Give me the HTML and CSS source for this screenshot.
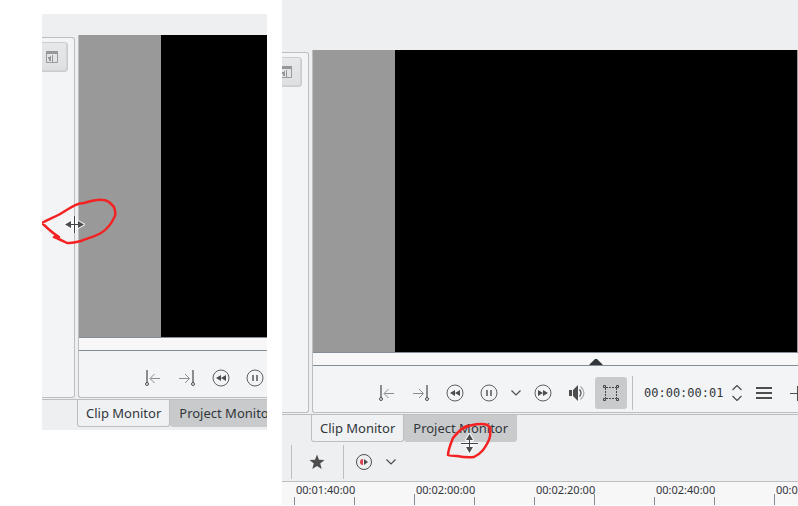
FILE: index.html
```html
<!DOCTYPE html>
<html lang="en">
<head>
<meta charset="utf-8">
<title>Monitor panel resizing</title>
<link rel="stylesheet" href="styles.css">
</head>
<body>
<svg class="symbols" aria-hidden="true">
  <symbol id="mark-in" viewBox="0 0 16 16"><path d="M1 0h2v13H1z" fill="#8b8d8f"/><path d="M5.500 8.500H15M9.500 4L5 8.500 9.500 13" fill="none" stroke="#8b8d8f"/><circle cx="2" cy="14" r="1.500" fill="#f3f4f6" stroke="#4d4d4d"/></symbol>
  <symbol id="mark-out" viewBox="0 0 16 16"><path d="M13 0h2v13h-2z" fill="#8b8d8f"/><path d="M0 8.500h10M6 4l4.500 4.500L6 13" fill="none" stroke="#8b8d8f"/><circle cx="14" cy="14" r="1.500" fill="#f3f4f6" stroke="#4d4d4d"/></symbol>
  <symbol id="rewind" viewBox="0 0 18 18"><circle cx="9" cy="9" r="8" fill="none" stroke="#5d5f61"/><path d="M9 6v6L4 9zM14 6v6L9 9z" fill="#4d4d4d"/></symbol>
  <symbol id="forward" viewBox="0 0 18 18"><circle cx="9" cy="9" r="8" fill="none" stroke="#5d5f61"/><path d="M4 6v6l5-3zM9 6v6l5-3z" fill="#4d4d4d"/></symbol>
  <symbol id="pause" viewBox="0 0 18 18"><circle cx="9" cy="9" r="8" fill="none" stroke="#5d5f61"/><path d="M6 6h2v6H6zM10 6h2v6h-2z" fill="#7b7d7f"/></symbol>
  <symbol id="chevron" viewBox="0 0 10 6"><path d="M.5.5L5 5 9.500.5" fill="none" stroke="#4d4d4d" stroke-width="1.200"/></symbol>
  <symbol id="window" viewBox="0 0 12 12"><path d="M.5.5h11v11H.5z" fill="none" stroke="#9b9d9e"/><path d="M0 0h12v3H0z" fill="#96989a"/><path d="M4 5h1v5H3V8H2V6h2zM6 4h1v7H6z" fill="#96989a"/></symbol>
</svg>

<figure class="shot shot-narrow">
  <div class="header"></div>
  <div class="panels">
    <section class="bin" aria-label="Project bin">
      <button class="bin-button" aria-label="Show panel"><svg width="12" height="12"><use href="#window"/></svg></button>
    </section>
    <section class="monitor" aria-label="Monitor">
      <div class="video"><div class="frame"></div></div>
      <div class="seek"></div>
      <div class="controls">
        <button class="tool" aria-label="Zone start"><svg width="16" height="16"><use href="#mark-in"/></svg></button>
        <button class="tool" aria-label="Zone end"><svg width="16" height="16"><use href="#mark-out"/></svg></button>
        <button class="tool" aria-label="Rewind"><svg width="18" height="18"><use href="#rewind"/></svg></button>
        <button class="tool" aria-label="Pause"><svg width="18" height="18"><use href="#pause"/></svg></button>
      </div>
    </section>
  </div>
  <nav class="tabs">
    <button class="tab tab-active">Clip Monitor</button>
    <button class="tab">Project Monitor</button>
  </nav>
  <svg class="note note-side" width="80" height="52" viewBox="0 0 80 52" aria-hidden="true">
    <path class="ink" d="M2 28C11 23 18 21 25 16C33 11 38 8 44 8C51 6 57 4 63 5C69 5 71 9 74 12C75 16 76 17 75 21C72 27 69 33 61 38C54 42 48 43 41 46C36 47 32 48 27 48C23 46 19 44 14 42L19 42C12 38 8 34 2 28"/>
  </svg>
  <svg class="pointer pointer-side" width="21" height="21" viewBox="0 0 21 21" aria-hidden="true">
    <path class="halo" d="M10.500 2v17M1.500 10.500h18M7 7.500l-5.500 3 5.500 3zM14 7.500l5.500 3-5.500 3z"/>
    <path class="line" d="M10.500 2v17M6 10.500h9"/>
    <path class="heads" d="M7 7l-6 3.500 6 3.500zM14 7l6 3.500-6 3.500z"/>
  </svg>
</figure>

<figure class="shot shot-wide">
  <div class="header"></div>
  <div class="panels">
    <section class="bin" aria-label="Project bin">
      <button class="bin-button" aria-label="Show panel"><svg width="12" height="12"><use href="#window"/></svg></button>
    </section>
    <section class="monitor" aria-label="Monitor">
      <div class="video"><div class="frame"></div></div>
      <div class="seek"><svg class="playhead" width="14" height="6" viewBox="0 0 14 6"><path d="M0 6l6-6h2l6 6z" fill="#31363b"/></svg></div>
      <div class="controls">
        <button class="tool" aria-label="Zone start"><svg width="16" height="16"><use href="#mark-in"/></svg></button>
        <button class="tool" aria-label="Zone end"><svg width="16" height="16"><use href="#mark-out"/></svg></button>
        <button class="tool" aria-label="Rewind"><svg width="18" height="18"><use href="#rewind"/></svg></button>
        <button class="tool" aria-label="Pause"><svg width="18" height="18"><use href="#pause"/></svg></button>
        <button class="tool tool-menu" aria-label="Play options"><svg width="10" height="6"><use href="#chevron"/></svg></button>
        <button class="tool" aria-label="Forward"><svg width="18" height="18"><use href="#forward"/></svg></button>
        <button class="tool" aria-label="Volume"><svg width="16" height="16" viewBox="0 0 16 16"><path d="M0 5h3v6H0zM4 5l5-5v16l-5-5z" fill="#4d4d4d"/><path d="M10.500 4.500q3 3.500 0 7" fill="none" stroke="#4d4d4d" stroke-width="1.200"/><path d="M11.500 1.500q7 6.500 0 13" fill="none" stroke="#a4a6a8" stroke-width="1.200"/></svg></button>
        <button class="tool tool-on" aria-label="Edit mode" aria-pressed="true"><svg width="16" height="16" viewBox="0 0 16 16" fill="none" stroke="#424446"><path d="M3 2.500h10M3 13.500h10M2.500 3v10M13.500 3v10" stroke-dasharray="2 1"/><path d="M.5.5h2v2h-2zM13.500.5h2v2h-2zM.5 13.500h2v2h-2zM13.500 13.500h2v2h-2z" fill="#c9cacc"/></svg></button>
        <span class="divider"></span>
        <input class="timecode" aria-label="Timecode" value="00:00:00:01">
        <button class="tool tool-spin" aria-label="Step frame"><svg width="10" height="16" viewBox="0 0 10 16"><path d="M.5 5L5 .5 9.500 5M.5 11L5 15.500 9.500 11" fill="none" stroke="#4d4d4d" stroke-width="1.200"/></svg></button>
        <button class="tool" aria-label="Menu"><svg width="16" height="12" viewBox="0 0 16 12"><path d="M0 0h16v2H0zM0 5h16v2H0zM0 10h16v2H0z" fill="#4d4d4d"/></svg></button>
        <button class="tool" aria-label="Add"><svg width="16" height="16" viewBox="0 0 16 16"><path d="M0 8.500h16M7.500 1v15" fill="none" stroke="#4d4d4d"/></svg></button>
      </div>
    </section>
  </div>
  <nav class="tabs">
    <button class="tab tab-active">Clip Monitor</button>
    <button class="tab">Project Monitor</button>
  </nav>
  <div class="timeline-tools">
    <span class="divider"></span>
    <button class="tool tool-star" aria-label="Favorite effects"><svg width="16" height="16" viewBox="0 0 16 16"><path d="M8 .5l2 5.300 5.500.2-4.300 3.500 1.500 5.500L8 12l-4.700 3 1.500-5.500L.5 6 6 5.800z" fill="#4d4d4d"/></svg></button>
    <span class="divider"></span>
    <button class="tool tool-preview" aria-label="Preview render"><svg width="18" height="18" viewBox="0 0 18 18"><circle cx="9" cy="9" r="7.500" fill="none" stroke="#4d4d4d"/><path d="M8 6v6Q5 12 5 9T8 6z" fill="#da4453"/><path d="M9 6v6l4-3z" fill="#4d4d4d"/></svg></button>
    <button class="tool tool-menu" aria-label="Preview options"><svg width="10" height="6"><use href="#chevron"/></svg></button>
  </div>
  <ol class="ruler">
    <li>00:01:40:00</li>
    <li>00:02:00:00</li>
    <li>00:02:20:00</li>
    <li>00:02:40:00</li>
    <li>00:03:00:00</li>
  </ol>
  <svg class="note note-below" width="50" height="42" viewBox="0 0 50 42" aria-hidden="true">
    <path class="ink" d="M17 10C24 6 29 5 37 5C43 5 46 8 45 12C46 16 45 19 43 23C40 29 37 34 29 38C23 39 17 38 12 37C8 37 5 37 3 36C3 31 6 24 8 19C12 14 16 9 22 7"/>
  </svg>
  <svg class="pointer pointer-below" width="21" height="21" viewBox="0 0 21 21" aria-hidden="true">
    <path class="halo" d="M2 10.500h17M10.500 1.500v18M7.500 7l3-5.500 3 5.500zM7.500 14l3 5.500 3-5.500z"/>
    <path class="line" d="M2 10.500h17M10.500 6v9"/>
    <path class="heads" d="M7 7l3.500-6L14 7zM7 14l3.500 6 3.500-6z"/>
  </svg>
</figure>
</body>
</html>
```

FILE: styles.css
```css
* { box-sizing: border-box; }

body {
  display: flex;
  align-items: flex-start;
  gap: 15px;
  margin: 0;
  padding-left: 42px;
  background: #fff;
  color: #31363b;
  font: 13px/18px "Noto Sans", sans-serif;
  overflow: hidden;
}

button, input {
  margin: 0;
  padding: 0;
  border: 0;
  background: none;
  color: inherit;
  font: inherit;
}

svg { display: block; }
.symbols { position: absolute; width: 0; height: 0; }

.shot {
  position: relative;
  margin: 0;
  background: #eeeff1;
  overflow: hidden;
}
.shot-narrow { flex: 0 0 225px; margin-top: 14px; padding-bottom: 3px; }
.shot-wide { flex: 1 1 0; min-width: 0; }

.shot-narrow .header { height: 21px; }
.shot-wide .header { height: 50px; }

/* Bin and monitor, side by side */
.panels { display: flex; gap: 3px; padding-bottom: 1px; }

.bin {
  display: flex;
  flex: none;
  justify-content: flex-end;
  align-items: flex-start;
  width: 33px;
  margin-top: 2px;
  padding: 4px 6px 0 0;
  border: solid #bcbec0;
  border-width: 1px 1px 1px 0;
  border-radius: 0 3px 3px 0;
  background: #f3f4f6;
  overflow: hidden;
}
.shot-wide .bin { width: 27px; }

.bin-button {
  display: flex;
  flex: none;
  justify-content: center;
  align-items: center;
  width: 32px;
  height: 30px;
  border: 1px solid #cbcccd;
  border-radius: 3px;
  background: linear-gradient(#e7e8e9, #dedfe0);
  box-shadow: inset -1px -1px #d2d3d4;
}

.monitor {
  flex: 1;
  min-width: 0;
  border: solid #bcbec0;
  border-width: 0 0 1px 1px;
  border-radius: 0 0 0 3px;
  background: #f3f4f6;
  overflow: hidden;
}
.video { padding-left: 82px; background: #999; }
.shot-wide .video { border-right: 1px solid #999; }
.frame { height: 302px; background: #000; }

.seek {
  display: flex;
  align-items: flex-end;
  height: 14px;
  padding-left: 276px;
  border: solid #858c93;
  border-width: 1px 0;
  background: #f7f7f7;
}

.controls {
  display: flex;
  gap: 2px;
  padding: 11px 0 3px 58px;
}
.tool {
  display: flex;
  flex: none;
  justify-content: center;
  align-items: center;
  width: 32px;
  height: 32px;
  border-radius: 3px;
}
.tool-menu { width: 18px; }
.tool-spin { width: 18px; }
.tool-on { background: #c9cacc; }

.divider { flex: none; width: 1px; height: 34px; background: #bcbec0; }
.controls .divider { margin: -1px 6px -1px 3px; }

.timecode {
  flex: none;
  width: 85px;
  padding-left: 3px;
  font: 12px/16px "DejaVu Sans Mono", monospace;
}

/* Tabs under the monitor */
.tabs {
  display: flex;
  padding-left: 35px;
  border-top: 1px solid #bcbec0;
}
.shot-wide .tabs { padding-left: 29px; }
.tab {
  flex: none;
  height: 27px;
  padding: 0 9px 1px;
  border-radius: 0 0 3px 3px;
  background: #c9cacc;
  white-space: nowrap;
}
.tab-active {
  padding: 0 8px;
  border: solid #bcbec0;
  border-width: 0 1px 1px;
  background: #f0f1f3;
}

.timeline-tools {
  display: flex;
  align-items: center;
  height: 39px;
  padding-left: 9px;
}
.tool-star { width: 42px; margin: 0 5px 0 4px; }
.tool-preview { margin: 0 2px 0 4px; }

/* Ticks sit on the bottom edge: short every 60px, tall every 180px */
.ruler {
  display: flex;
  height: 24px;
  margin: 0;
  padding: 0 0 0 14px;
  border-top: 1px solid #bcbec0;
  background:
    linear-gradient(90deg, #858c93 1px, transparent 1px) 12px 100% / 60px 8px repeat-x,
    linear-gradient(90deg, #858c93 1px, transparent 1px) 132px 100% / 180px 11px repeat-x,
    #f7f7f7;
  font-size: 11px;
  line-height: 16px;
  list-style: none;
  overflow: hidden;
}
.ruler li { flex: 0 0 120px; }

/* Hand-drawn rings and resize pointers over the panels */
.note, .pointer { position: absolute; pointer-events: none; }
.note-side { left: -2px; top: 181px; }
.pointer-side { left: 22px; top: 200px; }
.note-below { left: 163px; top: 419px; }
.pointer-below { left: 177px; top: 433px; }
.ink { fill: none; stroke: #f42222; stroke-width: 2.5; stroke-linejoin: round; stroke-linecap: round; }
.halo { fill: #fff; stroke: #fff; stroke-opacity: .8; stroke-width: 3; stroke-linejoin: round; }
.line { fill: none; stroke: #3f4244; stroke-width: 1; }
.heads { fill: #4d4d4d; }
```
